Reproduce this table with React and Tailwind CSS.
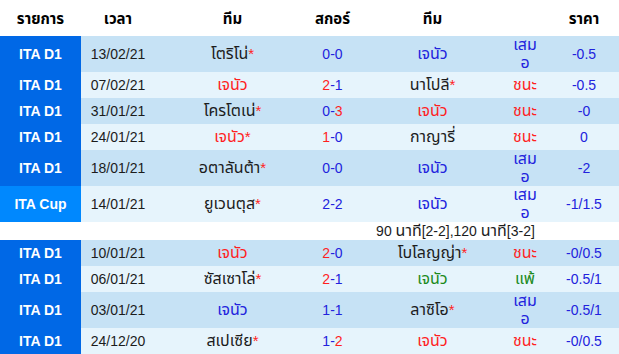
import React from 'react';

const BLUE = 'text-[#2222dd]';
const RED = 'text-[#ff1f1f]';
const GREEN = 'text-[#1b8a1b]';
const DARK = 'text-[#1c1c1c]';

const rows = [
  { lg: 'ITA D1', date: '13/02/21', home: ['โตริโน่', DARK, true], score: ['0', '0', null], away: ['เจนัว', BLUE, false], res: 'draw', price: '-0.5', tall: true },
  { lg: 'ITA D1', date: '07/02/21', home: ['เจนัว', RED, false], score: ['2', '1', 'h'], away: ['นาโปลี', DARK, true], res: 'win', price: '-0.5' },
  { lg: 'ITA D1', date: '31/01/21', home: ['โครโตเน่', DARK, true], score: ['0', '3', 'a'], away: ['เจนัว', RED, false], res: 'win', price: '-0' },
  { lg: 'ITA D1', date: '24/01/21', home: ['เจนัว', RED, true], score: ['1', '0', 'h'], away: ['กาญารี่', DARK, false], res: 'win', price: '0' },
  { lg: 'ITA D1', date: '18/01/21', home: ['อตาลันต้า', DARK, true], score: ['0', '0', null], away: ['เจนัว', BLUE, false], res: 'draw', price: '-2', tall: true },
  { lg: 'ITA Cup', date: '14/01/21', home: ['ยูเวนตุส', DARK, true], score: ['2', '2', null], away: ['เจนัว', BLUE, false], res: 'draw', price: '-1/1.5', tall: true, note: true },
  { lg: 'ITA D1', date: '10/01/21', home: ['เจนัว', RED, false], score: ['2', '0', 'h'], away: ['โบโลญญ่า', DARK, true], res: 'win', price: '-0/0.5' },
  { lg: 'ITA D1', date: '06/01/21', home: ['ซัสเซาโล่', DARK, true], score: ['2', '1', 'h'], away: ['เจนัว', GREEN, false], res: 'loss', price: '-0.5/1' },
  { lg: 'ITA D1', date: '03/01/21', home: ['เจนัว', BLUE, false], score: ['1', '1', null], away: ['ลาซิโอ', DARK, true], res: 'draw', price: '-0.5/1', tall: true },
  { lg: 'ITA D1', date: '24/12/20', home: ['สเปเซีย', DARK, true], score: ['1', '2', 'a'], away: ['เจนัว', RED, false], res: 'win', price: '-0/0.5' },
];

const cols = 'grid grid-cols-[81px_74px_155px_45px_155px_30px_79px]';

function Team({ t }) {
  const [name, color, star] = t;
  return (
    <span className={`${color} text-[16px]`}>
      {name}
      {star && <span className="text-[#ff2222] text-[15px]">*</span>}
    </span>
  );
}

function Result({ res }) {
  if (res === 'draw')
    return (
      <span className={`${BLUE} text-[16px] leading-[18px] text-center`}>
        เสม<br />อ
      </span>
    );
  if (res === 'loss') return <span className={`${GREEN} text-[16px]`}>แพ้</span>;
  return <span className={`${RED} text-[16px]`}>ชนะ</span>;
}

export default function App() {
  return (
    <div className="w-[619px] h-[354px] bg-white overflow-hidden text-[14px] font-['Liberation_Sans','Noto_Sans_Thai','Noto_Sans',sans-serif]">
      {/* header */}
      <div className={`${cols} h-[36px] items-center font-bold text-black text-[15px] pt-[3px]`}>
        <div className="text-center">รายการ</div>
        <div className="text-center">เวลา</div>
        <div className="text-center">ทีม</div>
        <div className="text-center">สกอร์</div>
        <div className="text-center">ทีม</div>
        <div></div>
        <div className="text-center pl-[9px]">ราคา</div>
      </div>

      {rows.map((r, i) => (
        <React.Fragment key={i}>
          <div className={`${cols} ${r.tall ? 'h-[36px]' : 'h-[26px]'} ${i % 2 === 0 ? 'bg-[#c6e2f5]' : 'bg-[#e6f4fc]'}`}>
            <div className={`flex items-center justify-center font-bold text-white ${r.lg === 'ITA Cup' ? 'bg-[#0088fe]' : 'bg-[#0068e6]'}`}>
              {r.lg}
            </div>
            <div className={`flex items-center justify-center ${DARK}`}>{r.date}</div>
            <div className="flex items-center justify-center"><Team t={r.home} /></div>
            <div className={`flex items-center justify-center ${BLUE}`}>
              <span className={r.score[2] === 'h' ? RED : ''}>{r.score[0]}</span>
              -
              <span className={r.score[2] === 'a' ? RED : ''}>{r.score[1]}</span>
            </div>
            <div className="flex items-center justify-center"><Team t={r.away} /></div>
            <div className="flex items-center justify-center"><Result res={r.res} /></div>
            <div className={`flex items-center justify-center pl-[9px] ${BLUE}`}>{r.price}</div>
          </div>
          {r.note && (
            <div className={`h-[18px] pl-[292px] text-center leading-[18px] ${DARK}`}>
              90 <span className="text-[16px]">นาที</span>[2-2],120 <span className="text-[16px]">นาที</span>[3-2]
            </div>
          )}
        </React.Fragment>
      ))}
    </div>
  );
}
